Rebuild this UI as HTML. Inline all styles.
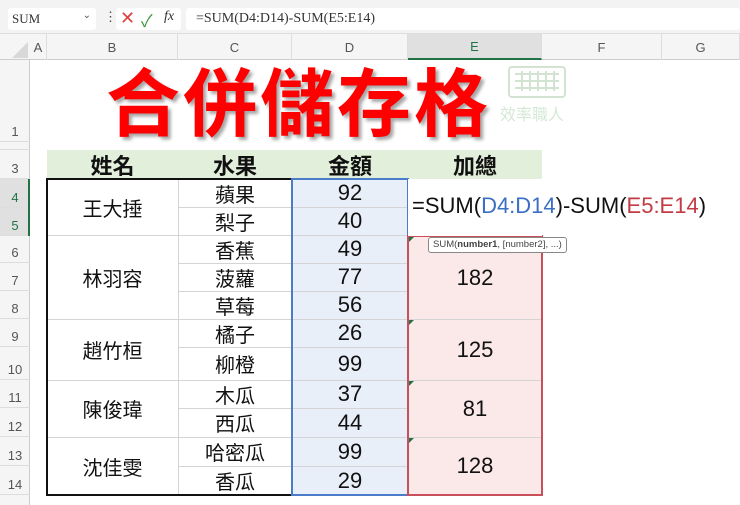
<!DOCTYPE html>
<html><head><meta charset="utf-8"><style>
*{margin:0;padding:0;box-sizing:border-box}
body{width:740px;height:505px;overflow:hidden;background:#fff;position:relative;font-family:"Liberation Sans","Noto Sans CJK TC",sans-serif}
.a{position:absolute}
.c{position:absolute;display:flex;align-items:center;justify-content:center;color:#111}
.rh{position:absolute;left:0;width:30px;color:#555;font-size:13px;text-align:center;border-bottom:1px solid #ddd;display:flex;align-items:flex-end;justify-content:center;padding-bottom:2px}
.ch{position:absolute;top:34px;height:26px;color:#555;font-size:13px;display:flex;align-items:center;justify-content:center;border-right:1px solid #ddd}
.hl{position:absolute;height:1px;background:#d4d4d4}
.vl{position:absolute;width:1px;background:#d4d4d4}
.t{font-size:20px}
.n{font-size:22px}
</style></head><body>
<div class="a" style="left:0;top:0;width:740px;height:34px;background:#f3f3f3;border-bottom:1px solid #ddd"></div>
<div class="a" style="left:8px;top:8px;width:88px;height:22px;background:#fff;border-radius:3px;font-family:'Liberation Serif',serif;font-size:13px;color:#333;padding:3px 4px">SUM<span style="position:absolute;right:5px;top:2px;font-size:10px;color:#555">&#8964;</span></div>
<div class="a" style="left:104px;top:9px;font-size:13px;color:#444">&#8942;</div>
<div class="a" style="left:116px;top:8px;width:65px;height:22px;background:#fff;border-radius:3px"></div>
<div class="a" style="left:120px;top:8px;font-size:18px;color:#e04040">&#10005;</div>
<div class="a" style="left:141px;top:7px;font-size:17px;color:#3a9a3a">&#10003;</div>
<div class="a" style="left:164px;top:9px;font-size:14px;font-family:'Liberation Serif',serif;font-style:italic;color:#333">fx</div>
<div class="a" style="left:186px;top:8px;width:554px;height:22px;background:#fff;border-radius:3px;font-family:'Liberation Serif',serif;font-size:14px;color:#333;padding:3px 10px">=SUM(D4:D14)-SUM(E5:E14)</div>
<div class="a" style="left:0;top:34px;width:740px;height:26px;background:#f5f5f5;border-bottom:1px solid #ccc"></div>
<div class="a" style="left:12px;top:42px;width:0;height:0;border-left:16px solid transparent;border-bottom:16px solid #d8d8d8"></div>
<div class="ch" style="left:30px;width:17px">A</div>
<div class="ch" style="left:47px;width:131px">B</div>
<div class="ch" style="left:178px;width:114px">C</div>
<div class="ch" style="left:292px;width:116px">D</div>
<div class="ch" style="left:408px;width:134px;background:#e0e0e0;color:#217346;border-bottom:2px solid #217346">E</div>
<div class="ch" style="left:542px;width:120px">F</div>
<div class="ch" style="left:662px;width:78px">G</div>
<div class="a" style="left:0;top:60px;width:30px;height:445px;background:#f5f5f5;border-right:1px solid #ccc"></div>
<div class="rh" style="top:60px;height:82px">1</div>
<div class="rh" style="top:142px;height:8px;font-size:6px"></div>
<div class="rh" style="top:150px;height:29px">3</div>
<div class="rh" style="top:179px;height:29px;background:#e0e0e0;color:#217346">4</div>
<div class="rh" style="top:208px;height:28px;background:#e0e0e0;color:#217346">5</div>
<div class="a" style="left:28px;top:179px;width:2px;height:57px;background:#217346"></div>
<div class="rh" style="top:236px;height:27px">6</div>
<div class="rh" style="top:263px;height:28px">7</div>
<div class="rh" style="top:291px;height:28px">8</div>
<div class="rh" style="top:319px;height:28px">9</div>
<div class="rh" style="top:347px;height:33px">10</div>
<div class="rh" style="top:380px;height:28px">11</div>
<div class="rh" style="top:408px;height:29px">12</div>
<div class="rh" style="top:437px;height:29px">13</div>
<div class="rh" style="top:466px;height:29px">14</div>
<div class="a" style="left:106px;top:54px;font-size:74px;font-weight:bold;color:#ff0000;letter-spacing:3px;text-shadow:3px 3px 3px rgba(0,0,0,.35);font-family:'Noto Sans CJK TC',sans-serif;line-height:90px">合併儲存格</div>
<svg class="a" style="left:508px;top:66px" width="58" height="32" viewBox="0 0 58 32"><g fill="none" stroke="#d2e3d2" stroke-width="2"><rect x="1" y="1" width="56" height="30" rx="3"/><path d="M7 8h44M7 15h44M7 22h44M14 5v20M22 5v20M30 5v20M38 5v20M46 5v20"/></g></svg>
<div class="a" style="left:500px;top:101px;font-size:16px;color:#d5e8d5">效率職人</div>
<div class="a" style="left:47px;top:150px;width:495px;height:29px;background:#e2efda"></div>
<div class="c" style="left:47px;top:150px;width:131px;height:29px;font-size:22px;font-weight:bold">姓名</div>
<div class="c" style="left:178px;top:150px;width:114px;height:29px;font-size:22px;font-weight:bold">水果</div>
<div class="c" style="left:292px;top:150px;width:116px;height:29px;font-size:22px;font-weight:bold">金額</div>
<div class="c" style="left:408px;top:150px;width:134px;height:29px;font-size:22px;font-weight:bold">加總</div>
<div class="a" style="left:292px;top:179px;width:116px;height:316px;background:#e9eff9"></div>
<div class="a" style="left:408px;top:236px;width:134px;height:259px;background:#fbe9e9"></div>
<div class="hl" style="left:178px;top:207px;width:230px"></div>
<div class="hl" style="left:47px;top:235px;width:495px"></div>
<div class="hl" style="left:178px;top:263px;width:230px"></div>
<div class="hl" style="left:178px;top:291px;width:230px"></div>
<div class="hl" style="left:47px;top:319px;width:495px"></div>
<div class="hl" style="left:178px;top:347px;width:230px"></div>
<div class="hl" style="left:47px;top:380px;width:495px"></div>
<div class="hl" style="left:178px;top:408px;width:230px"></div>
<div class="hl" style="left:47px;top:437px;width:495px"></div>
<div class="hl" style="left:178px;top:466px;width:230px"></div>
<div class="vl" style="left:178px;top:179px;height:316px"></div>
<div class="a" style="left:46px;top:178px;width:247px;height:318px;border:2px solid #111;border-right:none"></div>
<div class="a" style="left:291px;top:178px;width:118px;height:318px;border:2px solid #4a7cc9"></div>
<div class="a" style="left:407px;top:235px;width:136px;height:261px;border:2px solid #c9505a"></div>
<div class="a" style="left:408px;top:179px;width:134px;height:57px;background:#fff"></div>
<div class="c t" style="left:47px;top:179px;width:131px;height:57px">王大捶</div>
<div class="c t" style="left:47px;top:236px;width:131px;height:83px">林羽容</div>
<div class="c t" style="left:47px;top:319px;width:131px;height:61px">趙竹桓</div>
<div class="c t" style="left:47px;top:380px;width:131px;height:57px">陳俊瑋</div>
<div class="c t" style="left:47px;top:437px;width:131px;height:58px">沈佳雯</div>
<div class="c t" style="left:178px;top:179px;width:114px;height:28px">蘋果</div>
<div class="c t" style="left:178px;top:207px;width:114px;height:28px">梨子</div>
<div class="c t" style="left:178px;top:235px;width:114px;height:28px">香蕉</div>
<div class="c t" style="left:178px;top:263px;width:114px;height:28px">菠蘿</div>
<div class="c t" style="left:178px;top:291px;width:114px;height:28px">草莓</div>
<div class="c t" style="left:178px;top:319px;width:114px;height:28px">橘子</div>
<div class="c t" style="left:178px;top:347px;width:114px;height:33px">柳橙</div>
<div class="c t" style="left:178px;top:380px;width:114px;height:28px">木瓜</div>
<div class="c t" style="left:178px;top:408px;width:114px;height:29px">西瓜</div>
<div class="c t" style="left:178px;top:437px;width:114px;height:29px">哈密瓜</div>
<div class="c t" style="left:178px;top:466px;width:114px;height:29px">香瓜</div>
<div class="c n" style="left:292px;top:179px;width:116px;height:28px">92</div>
<div class="c n" style="left:292px;top:207px;width:116px;height:28px">40</div>
<div class="c n" style="left:292px;top:235px;width:116px;height:28px">49</div>
<div class="c n" style="left:292px;top:263px;width:116px;height:28px">77</div>
<div class="c n" style="left:292px;top:291px;width:116px;height:28px">56</div>
<div class="c n" style="left:292px;top:319px;width:116px;height:28px">26</div>
<div class="c n" style="left:292px;top:347px;width:116px;height:33px">99</div>
<div class="c n" style="left:292px;top:380px;width:116px;height:28px">37</div>
<div class="c n" style="left:292px;top:408px;width:116px;height:29px">44</div>
<div class="c n" style="left:292px;top:437px;width:116px;height:29px">99</div>
<div class="c n" style="left:292px;top:466px;width:116px;height:29px">29</div>
<div class="c n" style="left:408px;top:236px;width:134px;height:83px">182</div>
<div class="c n" style="left:408px;top:319px;width:134px;height:61px">125</div>
<div class="c n" style="left:408px;top:380px;width:134px;height:57px">81</div>
<div class="c n" style="left:408px;top:437px;width:134px;height:58px">128</div>
<div class="a" style="left:412px;top:193px;font-size:22px;color:#111;white-space:nowrap;background:#fff">=SUM(<span style="color:#3b6fc4">D4:D14</span>)-SUM(<span style="color:#c23b45">E5:E14</span>)</div>
<div class="a" style="left:428px;top:237px;height:16px;padding:0 4px;border:1px solid #888;border-radius:3px;background:#fff;font-size:9.5px;color:#444;line-height:14px;white-space:nowrap">SUM(<b>number1</b>, [number2], ...)</div>
<div class="a" style="left:409px;top:237px;border-top:5px solid #217346;border-right:5px solid transparent"></div>
<div class="a" style="left:409px;top:320px;border-top:5px solid #217346;border-right:5px solid transparent"></div>
<div class="a" style="left:409px;top:381px;border-top:5px solid #217346;border-right:5px solid transparent"></div>
<div class="a" style="left:409px;top:438px;border-top:5px solid #217346;border-right:5px solid transparent"></div>
</body></html>
